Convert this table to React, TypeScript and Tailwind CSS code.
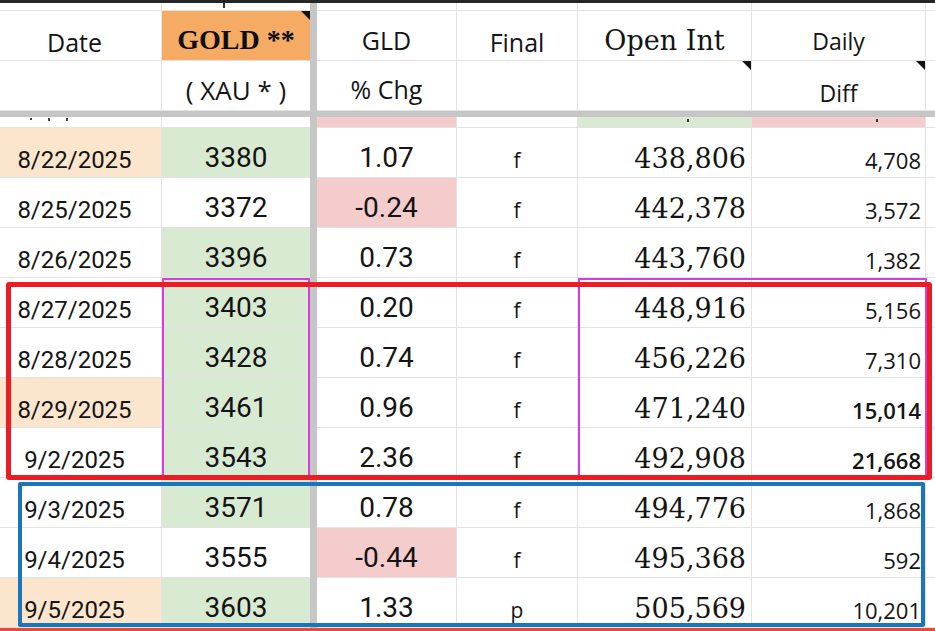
import React from 'react';

type Row = {
  date: string;
  dBg: string;
  gold: string;
  gBg: string;
  gld: string;
  lBg: string;
  fin: string;
  oi: string;
  diff: string;
  bold?: boolean;
};

const PEACH = 'bg-[#fce5cd]';
const GREEN = 'bg-[#d9ead3]';
const PINK = 'bg-[#f4cccc]';
const WHITE = 'bg-white';

const rows: Row[] = [
  { date: '8/22/2025', dBg: PEACH, gold: '3380', gBg: GREEN, gld: '1.07', lBg: WHITE, fin: 'f', oi: '438,806', diff: '4,708' },
  { date: '8/25/2025', dBg: WHITE, gold: '3372', gBg: WHITE, gld: '-0.24', lBg: PINK, fin: 'f', oi: '442,378', diff: '3,572' },
  { date: '8/26/2025', dBg: WHITE, gold: '3396', gBg: GREEN, gld: '0.73', lBg: WHITE, fin: 'f', oi: '443,760', diff: '1,382' },
  { date: '8/27/2025', dBg: WHITE, gold: '3403', gBg: GREEN, gld: '0.20', lBg: WHITE, fin: 'f', oi: '448,916', diff: '5,156' },
  { date: '8/28/2025', dBg: WHITE, gold: '3428', gBg: GREEN, gld: '0.74', lBg: WHITE, fin: 'f', oi: '456,226', diff: '7,310' },
  { date: '8/29/2025', dBg: PEACH, gold: '3461', gBg: GREEN, gld: '0.96', lBg: WHITE, fin: 'f', oi: '471,240', diff: '15,014', bold: true },
  { date: '9/2/2025', dBg: WHITE, gold: '3543', gBg: GREEN, gld: '2.36', lBg: WHITE, fin: 'f', oi: '492,908', diff: '21,668', bold: true },
  { date: '9/3/2025', dBg: WHITE, gold: '3571', gBg: GREEN, gld: '0.78', lBg: WHITE, fin: 'f', oi: '494,776', diff: '1,868' },
  { date: '9/4/2025', dBg: WHITE, gold: '3555', gBg: WHITE, gld: '-0.44', lBg: PINK, fin: 'f', oi: '495,368', diff: '592' },
  { date: '9/5/2025', dBg: PEACH, gold: '3603', gBg: GREEN, gld: '1.33', lBg: WHITE, fin: 'p', oi: '505,569', diff: '10,201' },
];

const GRID = 'border-b border-r border-[#e3e3e3]';
const GRIDB = 'border-b border-[#e3e3e3]';

function Tri() {
  return (
    <svg className="absolute top-0 right-0" width="9" height="9" viewBox="0 0 9 9">
      <polygon points="0,0 9,0 9,9" fill="#111" />
    </svg>
  );
}

function Divider() {
  return <div className="w-[7px] h-full bg-[#c6c6c6]" />;
}

export default function App() {
  return (
    <div className="relative w-[935px] h-[631px] overflow-hidden bg-white text-[#141414]">
      <div className="h-[3px] bg-[#262626]" />

      {/* top strip */}
      <div className="flex h-[8px]">
        <div className={`w-[162px] ${GRID}`} />
        <div className={`w-[148px] ${GRIDB}`}>
          <span className="block ml-[61px] w-[2px] h-[5px] bg-[#333]" />
        </div>
        <Divider />
        <div className={`w-[140px] ${GRID}`} />
        <div className={`w-[121px] ${GRID}`} />
        <div className={`w-[174px] ${GRID}`} />
        <div className={`w-[174px] ${GRID}`} />
        <div className={`flex-1 ${GRIDB}`} />
      </div>

      {/* header row 1 */}
      <div className="flex h-[50px] leading-none">
        <div className={`w-[162px] ${GRID} flex items-end justify-center pr-[12px] pb-[5px] font-['Open_Sans',sans-serif] text-[25px]`}>Date</div>
        <div className={`relative w-[148px] bg-[#f5ab63] ${GRIDB} flex items-end justify-center pb-[6px] font-['Liberation_Serif',serif] font-bold text-[28px] text-[#0d0d0d]`}>
          GOLD **
          <Tri />
        </div>
        <Divider />
        <div className={`w-[140px] ${GRID} flex items-end justify-center pb-[7px] font-['Open_Sans',sans-serif] text-[25px]`}>GLD</div>
        <div className={`w-[121px] ${GRID} flex items-end justify-center pb-[5px] font-['Open_Sans',sans-serif] text-[25px]`}>Final</div>
        <div className={`w-[174px] ${GRID} flex items-end justify-center pb-[6px] font-['DejaVu_Serif',serif] text-[27px]`}>Open Int</div>
        <div className={`w-[174px] ${GRID} flex items-end justify-center pb-[7px] font-['Open_Sans',sans-serif] text-[23px]`}>Daily</div>
        <div className={`flex-1 ${GRIDB}`} />
      </div>

      {/* header row 2 */}
      <div className="flex h-[50px] leading-none">
        <div className={`w-[162px] ${GRID}`} />
        <div className={`w-[148px] ${GRIDB} flex items-end justify-center pb-[7px] font-['Open_Sans',sans-serif] text-[26px]`}>( XAU * )</div>
        <Divider />
        <div className={`w-[140px] ${GRID} flex items-end justify-center pb-[8px] font-['Open_Sans',sans-serif] text-[25px]`}>% Chg</div>
        <div className={`w-[121px] ${GRID}`} />
        <div className={`relative w-[174px] ${GRID}`}>
          <Tri />
        </div>
        <div className={`relative w-[174px] ${GRID} flex items-end justify-center pb-[5px] font-['Open_Sans',sans-serif] text-[23px]`}>
          Diff
          <Tri />
        </div>
        <div className={`flex-1 ${GRIDB}`} />
      </div>

      {/* frozen divider */}
      <div className="h-[6px] bg-[#c6c6c6]" />

      {/* partial row */}
      <div className="flex h-[11px]">
        <div className={`w-[162px] ${GRID} flex items-start gap-[16px] pl-[30px] pt-[1px]`}>
          <span className="block w-[2px] h-[2px] bg-[#444]" />
          <span className="block w-[2px] h-[3px] bg-[#444]" />
          <span className="block w-[2px] h-[3px] bg-[#444]" />
        </div>
        <div className={`w-[148px] ${GRIDB}`} />
        <Divider />
        <div className={`w-[140px] ${PINK} ${GRID}`} />
        <div className={`w-[121px] ${GRID}`} />
        <div className={`w-[174px] ${GREEN} ${GRID} pl-[109px] pt-[2px]`}>
          <span className="block w-[2px] h-[3px] bg-[#333]" />
        </div>
        <div className={`w-[174px] ${PINK} ${GRID} pl-[124px] pt-[2px]`}>
          <span className="block w-[2px] h-[3px] bg-[#333]" />
        </div>
        <div className={`flex-1 ${GRIDB}`} />
      </div>

      {/* data rows */}
      {rows.map((r) => (
        <div key={r.date} className="flex h-[50px] leading-none">
          <div className={`w-[162px] ${r.dBg} ${GRID} flex items-end justify-center pr-[12px] pb-[5px] font-['Roboto',sans-serif] text-[24px]`}>{r.date}</div>
          <div className={`w-[148px] ${r.gBg} ${GRIDB} flex items-end justify-center pb-[5px] font-['Roboto',sans-serif] text-[28px]`}>{r.gold}</div>
          <Divider />
          <div className={`w-[140px] ${r.lBg} ${GRID} flex items-end justify-center pb-[5px] font-['Roboto',sans-serif] text-[28px]`}>{r.gld}</div>
          <div className={`w-[121px] bg-white ${GRID} flex items-end justify-center pb-[6px] font-['Open_Sans',sans-serif] text-[21px]`}>{r.fin}</div>
          <div className={`w-[174px] bg-white ${GRID} flex items-end justify-end pr-[5px] pb-[5px] font-['DejaVu_Serif',serif] text-[27px]`}>{r.oi}</div>
          <div className={`w-[174px] bg-white ${GRID} flex items-end justify-end pr-[4px] pb-[6px] font-['Open_Sans',sans-serif] text-[22px] ${r.bold ? 'font-semibold' : 'font-normal'}`}>{r.diff}</div>
          <div className={`flex-1 ${GRIDB}`} />
        </div>
      ))}

      <div className="h-[3px] bg-[#e54b3c]" />

      {/* highlight boxes */}
      <div className="absolute left-[162px] top-[278px] w-[148px] h-[200px] border-2 border-[#d23fdc]" />
      <div className="absolute left-[578px] top-[278px] w-[349px] h-[200px] border-2 border-[#d23fdc]" />
      <div className="absolute left-[6px] top-[282px] w-[926px] h-[198px] border-[5px] border-[#ec1c24] rounded-[3px]" />
      <div className="absolute left-[18px] top-[482px] w-[907px] h-[145px] border-4 border-[#1b75bb] rounded-[2px]" />
    </div>
  );
}
